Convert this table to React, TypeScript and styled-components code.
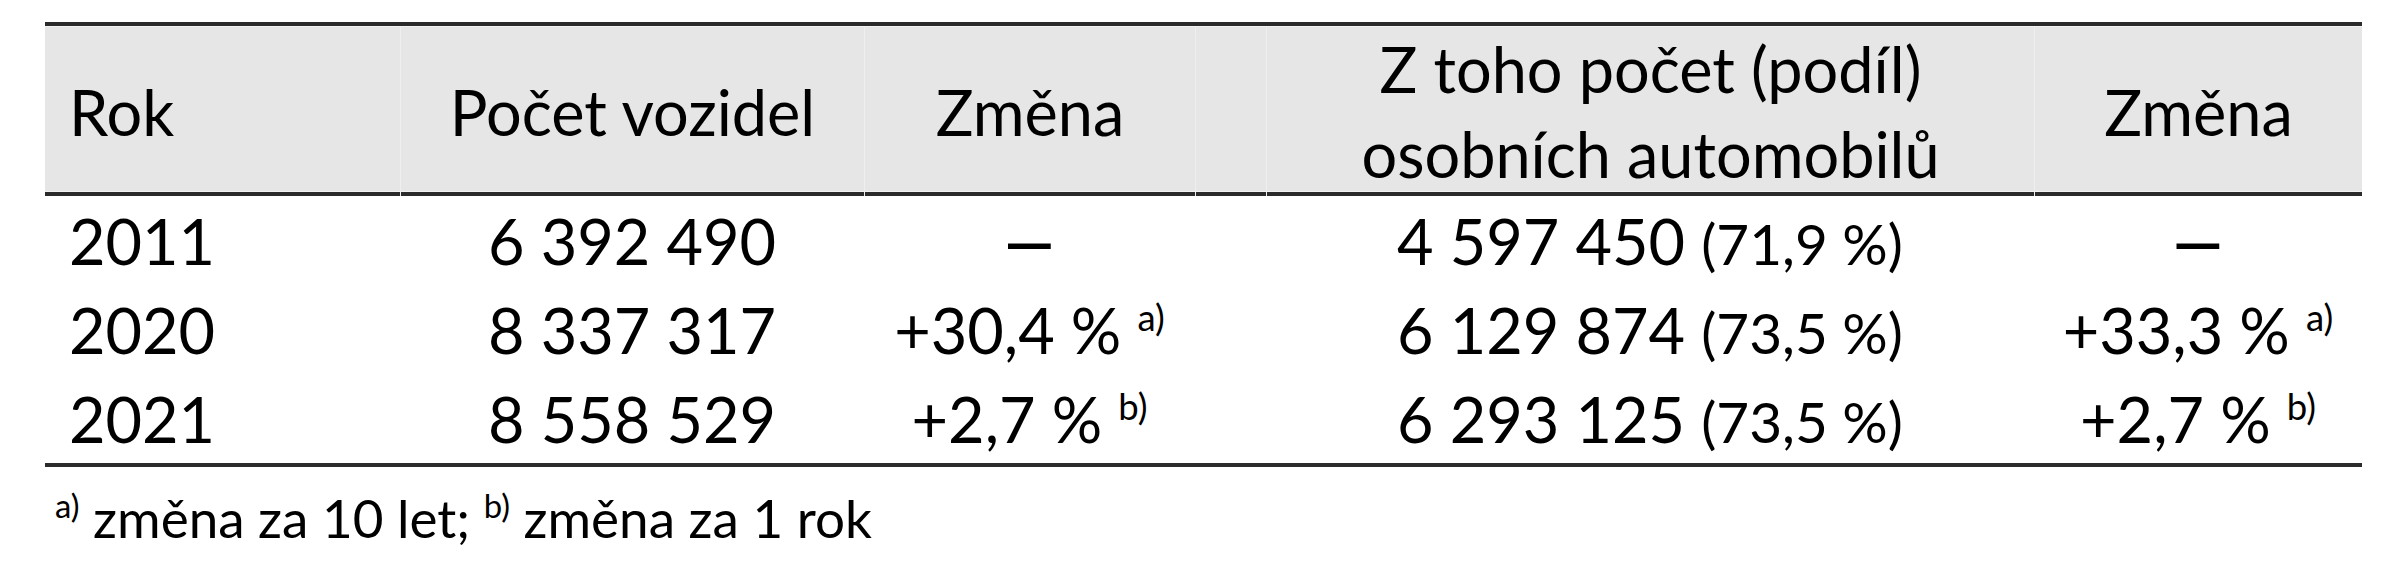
import React from "react";
import styled, { createGlobalStyle } from "styled-components";

const GlobalStyle = createGlobalStyle`
  html, body {
    margin: 0;
    padding: 0;
    background: #ffffff;
  }
  body {
    font-family: Lato, "Open Sans", "Noto Sans", sans-serif;
    color: #000000;
  }
`;

const COLUMNS = "355px 464px 331px 71px 768px 328px";

const Page = styled.div`
  padding: 22px 0 0 45px;
  width: 2317px;
`;

const HeadRow = styled.div`
  display: grid;
  grid-template-columns: ${COLUMNS};
  height: 166px;
  background: #e6e6e6;
  border-top: 4px solid #2b2b2b;
  border-bottom: 4px solid #2b2b2b;
  box-shadow: inset 0 1px 0 #f2f2f2, inset 0 -1px 0 #f2f2f2;
`;

const HeadCell = styled.div<{ $first?: boolean }>`
  display: flex;
  align-items: center;
  justify-content: ${(p) => (p.$first ? "flex-start" : "center")};
  padding-left: ${(p) => (p.$first ? "24px" : "0")};
  border-left: ${(p) => (p.$first ? "none" : "1px solid #efefef")};
  font-size: 63px;
  line-height: 85px;
  text-align: center;
  white-space: nowrap;
`;

const Body = styled.div`
  border-bottom: 4px solid #2b2b2b;
`;

const Row = styled.div`
  display: grid;
  grid-template-columns: ${COLUMNS};
  height: 89px;
`;

const Cell = styled.div<{ $first?: boolean }>`
  display: flex;
  align-items: center;
  justify-content: ${(p) => (p.$first ? "flex-start" : "center")};
  padding-left: ${(p) => (p.$first ? "24px" : "0")};
  font-size: 63px;
  line-height: 1.2;
  white-space: nowrap;
`;

const Share = styled.span`
  font-size: 0.9em;
`;

const Dash = styled.span`
  font-weight: 700;
`;

const Sup = styled.span`
  font-size: 0.58em;
  line-height: 0;
  vertical-align: 23px;
`;

const Note = styled.div`
  margin-top: 19px;
  padding-left: 10px;
  font-size: 53px;
  line-height: 1.2;
  white-space: nowrap;
`;

const NoteSup = styled.span`
  font-size: 0.62em;
  line-height: 0;
  vertical-align: 20px;
`;

type Data = {
  year: string;
  count: string;
  change: string;
  changeNote?: string;
  cars: string;
  share: string;
  carsChange: string;
  carsNote?: string;
};

const rows: Data[] = [
  { year: "2011", count: "6 392 490", change: "—", cars: "4 597 450", share: "(71,9 %)", carsChange: "—" },
  { year: "2020", count: "8 337 317", change: "+30,4 %", changeNote: "a)", cars: "6 129 874", share: "(73,5 %)", carsChange: "+33,3 %", carsNote: "a)" },
  { year: "2021", count: "8 558 529", change: "+2,7 %", changeNote: "b)", cars: "6 293 125", share: "(73,5 %)", carsChange: "+2,7 %", carsNote: "b)" },
];

const Change = ({ value, note }: { value: string; note?: string }) => (
  <span>
    {value === "—" ? <Dash>—</Dash> : value}
    {note && <>&nbsp;<Sup>{note}</Sup></>}
  </span>
);

export default function App() {
  return (
    <>
      <GlobalStyle />
      <Page>
        <HeadRow>
          <HeadCell $first>Rok</HeadCell>
          <HeadCell>Počet vozidel</HeadCell>
          <HeadCell>Změna</HeadCell>
          <HeadCell />
          <HeadCell>
            <span>
              Z toho počet (podíl)
              <br />
              osobních automobilů
            </span>
          </HeadCell>
          <HeadCell>Změna</HeadCell>
        </HeadRow>
        <Body>
          {rows.map((r) => (
            <Row key={r.year}>
              <Cell $first>{r.year}</Cell>
              <Cell>{r.count}</Cell>
              <Cell>
                <Change value={r.change} note={r.changeNote} />
              </Cell>
              <Cell />
              <Cell>
                <span>
                  {r.cars}&nbsp;<Share>{r.share}</Share>
                </span>
              </Cell>
              <Cell>
                <Change value={r.carsChange} note={r.carsNote} />
              </Cell>
            </Row>
          ))}
        </Body>
        <Note>
          <NoteSup>a)</NoteSup> změna za 10 let; <NoteSup>b)</NoteSup> změna za 1 rok
        </Note>
      </Page>
    </>
  );
}
